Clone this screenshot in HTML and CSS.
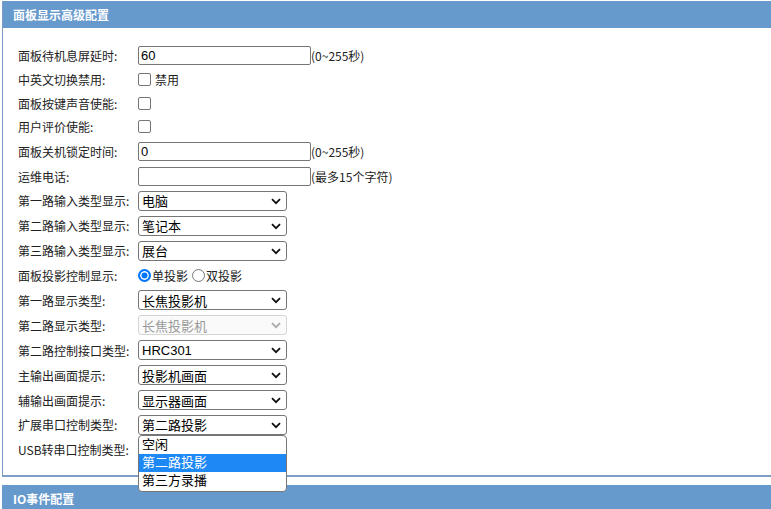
FILE: index.html
```html
<!DOCTYPE html>
<html lang="zh">
<head>
<meta charset="utf-8">
<link rel="stylesheet" href="styles.css">
</head>
<body>
<div class="panel">
  <div class="panel-head">面板显示高级配置</div>
  <div class="panel-body">
    <div class="row"><span class="lbl">面板待机息屏延时:</span><input class="txt" type="text" value="60"><span class="hint">(0~255秒)</span></div>
    <div class="row short"><span class="lbl">中英文切换禁用:</span><span class="chk"></span><span class="after">禁用</span></div>
    <div class="row short"><span class="lbl">面板按键声音使能:</span><span class="chk"></span></div>
    <div class="row short"><span class="lbl">用户评价使能:</span><span class="chk"></span></div>
    <div class="row"><span class="lbl">面板关机锁定时间:</span><input class="txt" type="text" value="0"><span class="hint">(0~255秒)</span></div>
    <div class="row"><span class="lbl">运维电话:</span><input class="txt" type="text" value=""><span class="hint">(最多15个字符)</span></div>
    <div class="row"><span class="lbl">第一路输入类型显示:</span><div class="sel"><span class="val">电脑</span><svg class="chev" viewBox="0 0 10 7" width="10" height="7"><path d="M1 1.2 L5 5.2 L9 1.2" fill="none" stroke="#111" stroke-width="1.8"/></svg></div></div>
    <div class="row"><span class="lbl">第二路输入类型显示:</span><div class="sel"><span class="val">笔记本</span><svg class="chev" viewBox="0 0 10 7" width="10" height="7"><path d="M1 1.2 L5 5.2 L9 1.2" fill="none" stroke="#111" stroke-width="1.8"/></svg></div></div>
    <div class="row"><span class="lbl">第三路输入类型显示:</span><div class="sel"><span class="val">展台</span><svg class="chev" viewBox="0 0 10 7" width="10" height="7"><path d="M1 1.2 L5 5.2 L9 1.2" fill="none" stroke="#111" stroke-width="1.8"/></svg></div></div>
    <div class="row"><span class="lbl">面板投影控制显示:</span><span class="radio on"></span><span class="rtxt">单投影</span><span class="radio"></span><span class="rtxt">双投影</span></div>
    <div class="row"><span class="lbl">第一路显示类型:</span><div class="sel"><span class="val">长焦投影机</span><svg class="chev" viewBox="0 0 10 7" width="10" height="7"><path d="M1 1.2 L5 5.2 L9 1.2" fill="none" stroke="#111" stroke-width="1.8"/></svg></div></div>
    <div class="row"><span class="lbl">第二路显示类型:</span><div class="sel dis"><span class="val">长焦投影机</span><svg class="chev" viewBox="0 0 10 7" width="10" height="7"><path d="M1 1.2 L5 5.2 L9 1.2" fill="none" stroke="#aaa" stroke-width="1.8"/></svg></div></div>
    <div class="row"><span class="lbl">第二路控制接口类型:</span><div class="sel"><span class="val">HRC301</span><svg class="chev" viewBox="0 0 10 7" width="10" height="7"><path d="M1 1.2 L5 5.2 L9 1.2" fill="none" stroke="#111" stroke-width="1.8"/></svg></div></div>
    <div class="row"><span class="lbl">主输出画面提示:</span><div class="sel"><span class="val">投影机画面</span><svg class="chev" viewBox="0 0 10 7" width="10" height="7"><path d="M1 1.2 L5 5.2 L9 1.2" fill="none" stroke="#111" stroke-width="1.8"/></svg></div></div>
    <div class="row"><span class="lbl">辅输出画面提示:</span><div class="sel"><span class="val">显示器画面</span><svg class="chev" viewBox="0 0 10 7" width="10" height="7"><path d="M1 1.2 L5 5.2 L9 1.2" fill="none" stroke="#111" stroke-width="1.8"/></svg></div></div>
    <div class="row"><span class="lbl">扩展串口控制类型:</span><div class="sel open"><span class="val">第二路投影</span><svg class="chev" viewBox="0 0 10 7" width="10" height="7"><path d="M1 1.2 L5 5.2 L9 1.2" fill="none" stroke="#111" stroke-width="1.8"/></svg>
      <ul class="dropdown">
        <li>空闲</li>
        <li class="hl">第二路投影</li>
        <li>第三方录播</li>
      </ul></div></div>
    <div class="row"><span class="lbl">USB转串口控制类型:</span></div>
  </div>
</div>
<div class="panel-head second">IO事件配置</div>
</body>
</html>
```
FILE: styles.css
```css
html, body {
  margin: 0;
  padding: 0;
  background: #fff;
  font-family: "Microsoft YaHei", "Noto Sans CJK SC", "Noto Sans", sans-serif;
  color: #222;
  font-size: 12px;
  overflow: hidden;
}
.panel {
  margin: 1px 0 0 2px;
  border-left: 1px solid #7d9cc6;
  border-bottom: 2px solid #7d9cc6;
}
.panel-head {
  background: #6699cc;
  color: #fff;
  font-weight: bold;
  font-size: 12px;
  height: 27px;
  line-height: 28px;
  padding-left: 10px;
}
.panel-head.second {
  margin: 8px 0 0 2px;
  padding-left: 11px;
  height: 30px;
  line-height: 28px;
}
.panel-body {
  padding: 15px 0 13px 15px;
}
.row {
  display: flex;
  align-items: center;
  height: 24.9px;
}
.row.short {
  height: 23.6px;
}
.lbl {
  width: 120px;
  flex: none;
  white-space: nowrap;
}
.txt {
  box-sizing: border-box;
  width: 173px;
  height: 19px;
  margin: 0;
  border: 1px solid #767676;
  border-radius: 2px;
  padding: 0 2px;
  font-family: "Liberation Sans", "Noto Sans CJK SC", sans-serif;
  font-size: 13px;
  color: #000;
  outline: none;
}
.hint {
  white-space: nowrap;
}
.chk {
  box-sizing: border-box;
  width: 13px;
  height: 13px;
  border: 1px solid #767676;
  border-radius: 2px;
  flex: none;
}
.after {
  margin-left: 4px;
}
.radio {
  box-sizing: border-box;
  width: 13px;
  height: 13px;
  border: 1px solid #767676;
  border-radius: 50%;
  flex: none;
}
.radio.on {
  border: 2px solid #0075ff;
  background: #0075ff;
  box-shadow: inset 0 0 0 1.5px #fff;
}
.rtxt {
  margin-left: 1px;
  margin-right: 4px;
}
.sel {
  position: relative;
  box-sizing: border-box;
  width: 149px;
  height: 20px;
  border: 1px solid #767676;
  border-radius: 3px;
  display: flex;
  align-items: center;
  padding-left: 3px;
  font-family: "Liberation Sans", "Noto Sans CJK SC", sans-serif;
  font-size: 13px;
  color: #000;
  background: #fff;
}
.sel.dis {
  border-color: #d5d5d5;
  background: #fafafa;
  color: #9a9a9a;
}
.chev {
  position: absolute;
  right: 5px;
  top: 6px;
}
.dropdown {
  position: absolute;
  left: -1px;
  top: 19px;
  width: 149px;
  box-sizing: border-box;
  margin: 0;
  padding: 0 0 1px;
  list-style: none;
  background: #fff;
  border: 1px solid #767676;
  border-radius: 4px;
  z-index: 5;
  overflow: hidden;
}
.dropdown li {
  height: 18px;
  line-height: 18px;
  padding-left: 3px;
  color: #000;
  white-space: nowrap;
}
.dropdown li.hl {
  background: #1e88f5;
  color: #fff;
}
```
